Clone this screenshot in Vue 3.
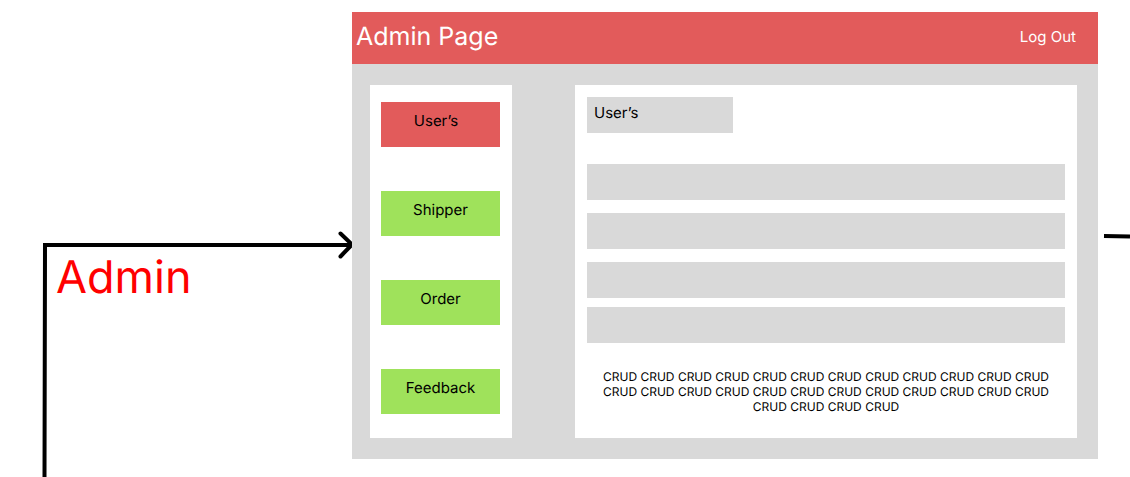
<script setup>
import { ref } from 'vue'

const sections = ['User’s', 'Shipper', 'Order', 'Feedback']
const current = ref('User’s')
const note = Array(28).fill('CRUD').join(' ')
</script>

<template>
  <div class="board">
    <div class="incoming">
      <svg class="connector" viewBox="0 0 352 247" aria-hidden="true">
        <path d="M44.500 247 L45 15 H351 M340.500 3.500 L352 14.500 L340.500 26.500" />
      </svg>
      <p class="connector-label">Admin</p>
    </div>

    <section class="screen">
      <header class="topbar">
        <h1>Admin Page</h1>
        <a href="#">Log Out</a>
      </header>
      <div class="content">
        <nav class="sidebar">
          <button
            v-for="name in sections"
            :key="name"
            type="button"
            :class="{ active: name === current }"
            @click="current = name"
          >{{ name }}</button>
        </nav>
        <main class="panel">
          <h2>User’s</h2>
          <ul>
            <li v-for="n in 4" :key="n"></li>
          </ul>
          <p>{{ note }}</p>
        </main>
      </div>
    </section>

    <svg class="outgoing" viewBox="0 0 32 6" aria-hidden="true">
      <path d="M6 3 L32 3.500" />
    </svg>
  </div>
</template>

<style>
body {
  margin: 0;
  background: #fff;
}
</style>

<style scoped>
.board {
  display: grid;
  grid-template-columns: 352px minmax(0, 1fr) 32px;
  align-items: start;
  min-height: 100vh;
  overflow: hidden;
  font-family: Inter, "Liberation Sans", sans-serif;
  text-rendering: geometricPrecision;
  color: #000;
}

h1,
h2,
p,
ul {
  margin: 0;
  padding: 0;
  font-weight: 400;
}

.incoming {
  display: grid;
  padding-top: 230px;
}

.connector,
.connector-label {
  grid-area: 1 / 1;
}

.connector {
  width: 352px;
  height: 247px;
}

.connector path,
.outgoing path {
  fill: none;
  stroke: #000;
  stroke-width: 4;
}

.connector path {
  stroke-linecap: round;
}

.outgoing {
  width: 32px;
  height: 6px;
  margin-top: 233px;
}

.connector-label {
  padding: 20px 0 0 56px;
  font-size: 45px;
  line-height: 54px;
  color: #f00;
}

.screen {
  margin-top: 12px;
  background: #d9d9d9;
}

.topbar {
  display: flex;
  align-items: center;
  justify-content: space-between;
  height: 52px;
  padding: 0 22px 0 4px;
  box-sizing: border-box;
  background: #e25b5b;
  color: #fff;
}

.topbar h1 {
  font-size: 25px;
  line-height: 30px;
  padding-bottom: 2px;
}

.topbar a {
  font-size: 15px;
  line-height: 18px;
  padding-bottom: 2px;
  color: #fff;
  text-decoration: none;
}

.content {
  display: grid;
  grid-template-columns: 142px minmax(0, 1fr);
  gap: 63px;
  padding: 21px 21px 21px 18px;
}

.sidebar {
  display: flex;
  flex-direction: column;
  gap: 44px;
  padding: 17px 12px 24px 11px;
  background: #fff;
}

.sidebar button {
  height: 45px;
  padding: 0 0 8px;
  border: 0;
  background: #9fe25b;
  font-family: inherit;
  font-size: 15px;
  line-height: 18px;
  text-rendering: inherit;
  color: #000;
}

.sidebar button.active {
  padding-right: 9px;
  background: #e25b5b;
}

.panel {
  padding: 12px 12px 0;
  background: #fff;
}

.panel h2 {
  width: 146px;
  height: 36px;
  padding: 7px 0 0 7px;
  box-sizing: border-box;
  font-size: 15px;
  line-height: 18px;
  background: #d9d9d9;
}

.panel ul {
  display: grid;
  gap: 13px;
  margin-top: 31px;
  list-style: none;
}

.panel li {
  height: 36px;
  background: #d9d9d9;
}

.panel li:last-child {
  margin-top: -4px;
}

.panel p {
  padding: 26px 8px 0;
  font-size: 12px;
  line-height: 15px;
  text-align: center;
}
</style>
